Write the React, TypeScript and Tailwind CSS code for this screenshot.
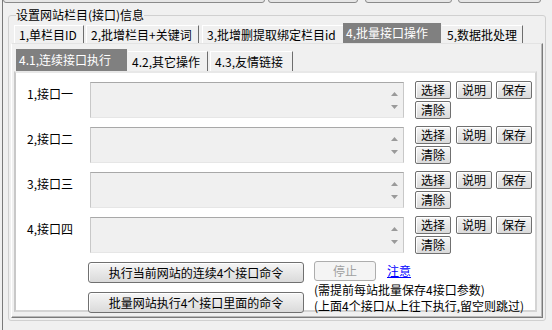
import React from "react";

function SmallBtn({ children }: { children: React.ReactNode }) {
  return (
    <button className="w-[36px] h-[18px] border border-[#707070] rounded-[2px] bg-linear-to-b from-[#f6f6f6] to-[#dadada] text-[12px] leading-none text-black flex items-center justify-center shadow-[inset_1px_1px_0_#ffffff]">
      {children}
    </button>
  );
}

function Arrows() {
  return (
    <div className="w-[17px] h-full flex flex-col items-center justify-between pt-[9px] pb-[8px]">
      <svg width="7" height="4" viewBox="0 0 7 4">
        <polygon points="3.5,0 7,4 0,4" fill="#9a9a9a" />
      </svg>
      <svg width="7" height="4" viewBox="0 0 7 4">
        <polygon points="0,0 7,0 3.5,4" fill="#9a9a9a" />
      </svg>
    </div>
  );
}

function Row({ label }: { label: string }) {
  return (
    <div className="flex items-start">
      <div className="w-[74px] pl-[11px] pt-[5px] leading-[14px] whitespace-nowrap">{label}</div>
      <div className="w-[314px] h-[36px] bg-[#f0f0f0] border border-[#c8c8c8] border-t-[#a8a8a8] border-b-[#e6e6e6] flex justify-end">
        <Arrows />
      </div>
      <div className="ml-[11px] -mt-[1px] flex flex-col gap-[2px]">
        <div className="flex">
          <SmallBtn>选择</SmallBtn>
          <div className="ml-[5px]">
            <SmallBtn>说明</SmallBtn>
          </div>
          <div className="ml-[4px]">
            <SmallBtn>保存</SmallBtn>
          </div>
        </div>
        <div className="flex">
          <SmallBtn>清除</SmallBtn>
        </div>
      </div>
    </div>
  );
}

export default function App() {
  return (
    <div className="w-[552px] h-[330px] bg-[#f0f0f0] overflow-hidden flex font-['Noto_Sans_CJK_SC','Liberation_Sans',sans-serif] text-[12px] text-black">
      <div className="w-[2px] shrink-0" />
      <div className="w-[550px] h-full border-l border-[#7a7a7a] flex flex-col">
        {/* bottoms of buttons above, clipped */}
        <div className="h-[3px] overflow-hidden flex items-end shrink-0">
          <div className="w-[262px] h-[20px] shrink-0 border border-[#8a8a8a] rounded-[3px] bg-[#e6e6e6]" />
          <div className="ml-[3px] w-[90px] h-[20px] shrink-0 border border-[#8a8a8a] rounded-[3px] bg-[#e6e6e6]" />
          <div className="ml-[7px] w-[87px] h-[20px] shrink-0 border border-[#8a8a8a] rounded-[3px] bg-[#e6e6e6]" />
          <div className="ml-[6px] w-[83px] h-[20px] shrink-0 border border-[#8a8a8a] rounded-[3px] bg-[#e6e6e6]" />
        </div>

        <fieldset className="ml-[5px] mt-[5px] w-[538px] h-[313px] border border-[#d0d0d0] rounded-[3px] p-0 m-0 shrink-0">
          <legend className="ml-[7px] p-0 leading-[14px] text-[12px]">设置网站栏目(接口)信息</legend>

          {/* outer tab control */}
          <div className="ml-[2px] mt-[1px] w-[532px] flex flex-col">
            <div className="h-[20px] flex items-end pl-[3px]">
              <div className="w-[70px] h-[18px] border-t border-l border-[#ffffff] border-r border-r-[#6d6d6d] pl-[4px] flex items-center whitespace-nowrap overflow-hidden">
                1,单栏目ID
              </div>
              <div className="ml-[2px] w-[113px] h-[18px] border-t border-l border-[#ffffff] border-r border-r-[#6d6d6d] pl-[4px] flex items-center whitespace-nowrap overflow-hidden">
                2,批增栏目+关键词
              </div>
              <div className="ml-[3px] w-[141px] h-[18px] border-t border-l border-[#ffffff] pl-[4px] flex items-center whitespace-nowrap overflow-hidden">
                3,批增删提取绑定栏目id
              </div>
              <div className="w-[98px] h-[20px] bg-[#808080] text-white pl-[3px] flex items-center whitespace-nowrap">
                4,批量接口操作
              </div>
              <div className="ml-[1px] w-[81px] h-[18px] border-t border-[#ffffff] border-r border-r-[#6d6d6d] pl-[5px] flex items-center whitespace-nowrap overflow-hidden">
                5,数据批处理
              </div>
            </div>

            {/* outer tab page */}
            <div className="h-[275px] border border-t-[#e3e3e3] border-l-[#ffffff] border-r-[#7a7a7a] border-b-[#7a7a7a] shadow-[inset_-1px_-1px_0_#b8b8b8] pl-[2px] pt-[5px] flex flex-col">
              {/* inner tab header */}
              <div className="h-[22px] flex items-end pl-[2px]">
                <div className="w-[111px] h-[22px] bg-[#808080] text-white pl-[3px] flex items-center whitespace-nowrap">
                  4.1,连续接口执行
                </div>
                <div className="ml-[1px] w-[80px] h-[20px] border-t border-[#ffffff] border-r border-r-[#6d6d6d] pl-[4px] flex items-center whitespace-nowrap">
                  4.2,其它操作
                </div>
                <div className="ml-[2px] w-[83px] h-[20px] border-t border-l border-[#ffffff] border-r border-r-[#6d6d6d] pl-[4px] flex items-center whitespace-nowrap">
                  4.3,友情链接
                </div>
              </div>

              {/* inner page */}
              <div className="w-[523px] h-[241px] bg-white border-2 border-l-[#c8c8c8] border-t-[#e8e8e8] border-r-[#d4d4d4] border-b-[#d4d4d4] pt-[9px] flex flex-col">
                <div className="flex flex-col gap-[8px]">
                  <Row label="1,接口一" />
                  <Row label="2,接口二" />
                  <Row label="3,接口三" />
                  <Row label="4,接口四" />
                </div>

                <div className="mt-[7px] pl-[72px] flex items-start">
                  <div className="flex flex-col gap-[9px] pt-[1px]">
                    <button className="w-[216px] h-[21px] border border-[#707070] rounded-[3px] bg-linear-to-b from-[#f6f6f6] to-[#dadada] shadow-[inset_1px_1px_0_#ffffff] text-[12px] leading-none flex items-center justify-center whitespace-nowrap">
                      执行当前网站的连续4个接口命令
                    </button>
                    <button className="w-[216px] h-[21px] border border-[#707070] rounded-[3px] bg-linear-to-b from-[#f6f6f6] to-[#dadada] shadow-[inset_1px_1px_0_#ffffff] text-[12px] leading-none flex items-center justify-center whitespace-nowrap">
                      批量网站执行4个接口里面的命令
                    </button>
                  </div>
                  <div className="ml-[10px] flex flex-col">
                    <div className="flex items-center">
                      <button className="w-[62px] h-[20px] border border-[#adadad] rounded-[3px] bg-[#f4f4f4] text-[#a0a0a0] text-[12px] leading-none flex items-center justify-center">
                        停止
                      </button>
                      <span className="ml-[11px] text-[#0000ff] underline leading-[14px]">注意</span>
                    </div>
                    <div className="mt-[1px] leading-[16px] whitespace-nowrap">(需提前每站批量保存4接口参数)</div>
                    <div className="leading-[16px] whitespace-nowrap">(上面4个接口从上往下执行,留空则跳过)</div>
                  </div>
                </div>
              </div>
            </div>
          </div>
        </fieldset>
      </div>
    </div>
  );
}
